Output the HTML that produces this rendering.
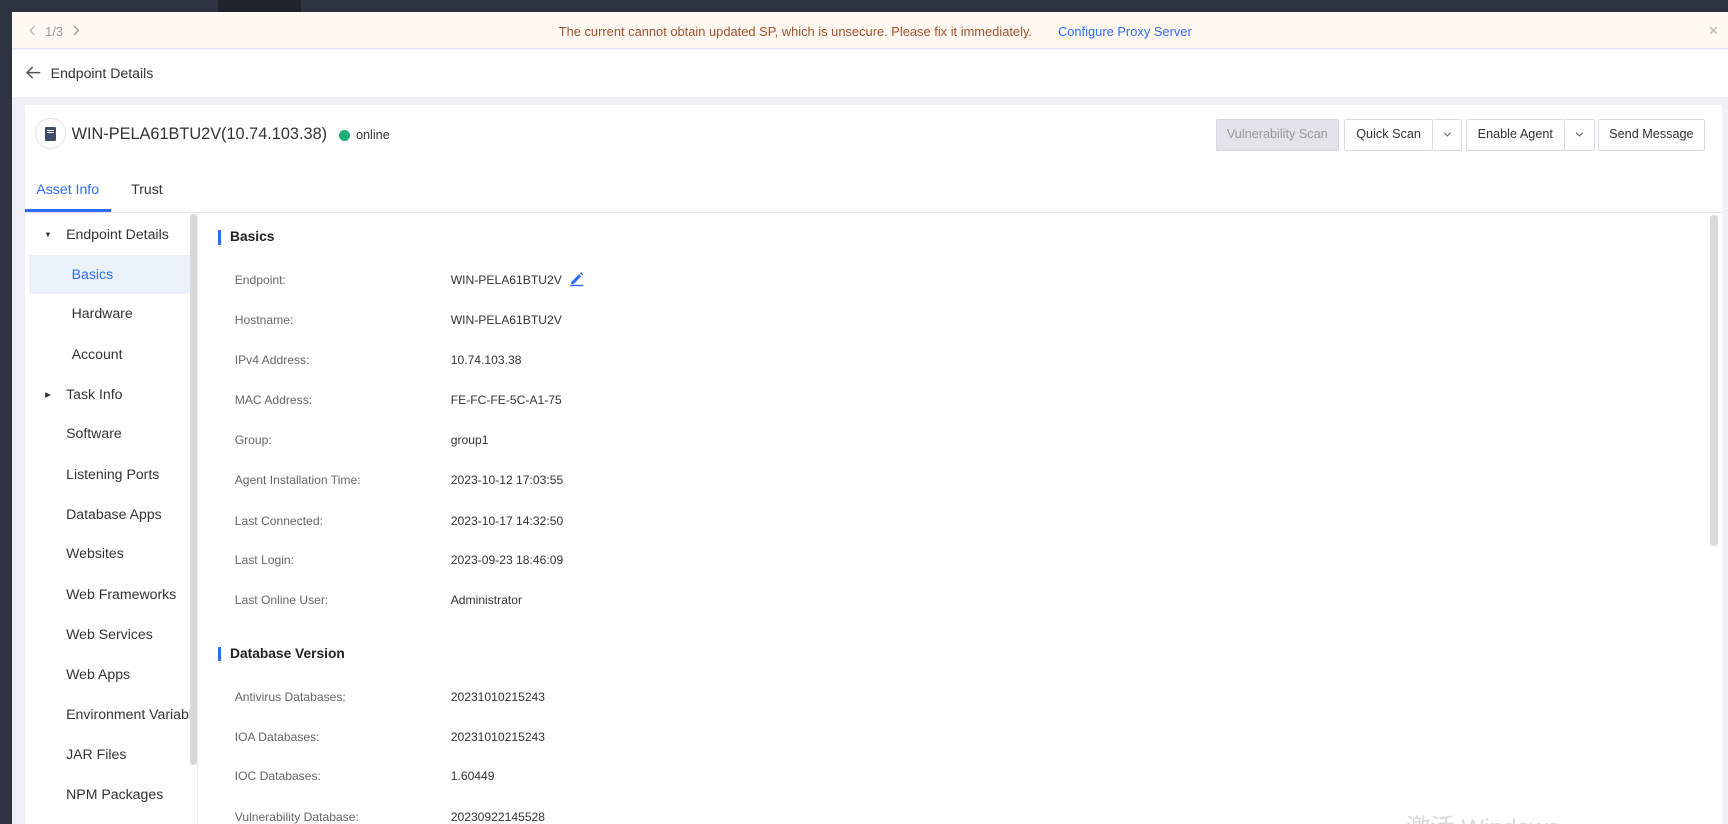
<!DOCTYPE html>
<html><head><meta charset="utf-8"><style>
html,body{margin:0;padding:0;overflow:hidden}
body{width:1568px;height:748px;zoom:1.10204;background:#2e3440;font-family:"Liberation Sans",Arial,sans-serif;position:relative;color:#333}
.abs{position:absolute}
.topdark{left:0;top:0;width:1568px;height:11px;background:#2e3440}
.topdark .b{position:absolute;left:198px;top:0;width:75px;height:11px;background:#1f232b}
.leftdark{left:0;top:0;width:11px;height:748px;background:#2e3440}
.main{left:11px;top:11px;width:1557px;height:737px;background:#edf0f7}
.banner{left:11px;top:11px;width:1557px;height:33px;background:#fff9f2;border-bottom:1px solid #e3e6ee;font-size:11.7px}
.hdr{left:11px;top:45px;width:1557px;height:43px;background:#fff}
.card{left:23px;top:95px;width:1540px;height:653px;background:#fff}
.btn{position:absolute;top:108px;height:29px;border:1px solid #d9dce3;border-radius:2px;background:#fff;font-size:11.5px;color:#333;line-height:27px;text-align:center;box-sizing:border-box}
.side div{position:absolute;left:0;width:146px;height:36px;line-height:36px;font-size:12.8px;color:#333}
.row{position:absolute;font-size:11px}
.row .l{position:absolute;left:213px;color:#666;white-space:nowrap}
.row .v{position:absolute;left:409px;color:#333;white-space:nowrap}
.sec{position:absolute;left:198px;font-size:12.5px;font-weight:bold;color:#222;border-left:3px solid #2f6bff;padding-left:8px;height:13px;line-height:13px}
</style></head><body>
<div class="abs topdark"><div class="b"></div></div>
<div class="abs leftdark"></div>
<div class="abs main"></div>
<div class="abs banner">
 <svg class="abs" style="left:15px;top:12px" width="6" height="10" viewBox="0 0 6 10"><path d="M5 1L1 5l4 4" fill="none" stroke="#bbb" stroke-width="1.2"/></svg>
 <span class="abs" style="left:30px;top:11px;color:#999">1/3</span>
 <svg class="abs" style="left:55px;top:12px" width="6" height="10" viewBox="0 0 6 10"><path d="M1 1l4 4-4 4" fill="none" stroke="#999" stroke-width="1.2"/></svg>
 <span class="abs" style="left:496px;top:11px;color:#a0522d">The current cannot obtain updated SP, which is unsecure. Please fix it immediately.</span>
 <span class="abs" style="left:949px;top:11px;color:#2f6bff">Configure Proxy Server</span>
 <svg class="abs" style="left:1540px;top:13px" width="8" height="8" viewBox="0 0 8 8"><path d="M1 1l6 6M7 1L1 7" stroke="#bbb" stroke-width="1.3"/></svg>
</div>
<div class="abs hdr">
 <svg class="abs" style="left:13px;top:15px" width="14" height="12" viewBox="0 0 14 12"><path d="M13 6H2M6 1L1 6l5 5" fill="none" stroke="#555" stroke-width="1.4"/></svg>
 <span class="abs" style="left:35px;top:14px;font-size:12.8px;color:#333">Endpoint Details</span>
</div>
<div class="abs card"></div>
<div class="abs" style="left:32px;top:107px;width:28px;height:28px;border:1.5px solid #e0e3ea;border-radius:50%;box-sizing:border-box;background:#fff"></div>
<div class="abs" style="left:41px;top:115px;width:10px;height:13px;background:#3d4d6a;border-radius:1px"></div>
<div class="abs" style="left:43px;top:118px;width:6px;height:1px;background:#fff"></div>
<div class="abs" style="left:43px;top:120px;width:6px;height:1px;background:#fff"></div>
<span class="abs" style="left:65px;top:113px;font-size:14.8px;color:#333">WIN-PELA61BTU2V(10.74.103.38)</span>
<div class="abs" style="left:308px;top:118px;width:10px;height:10px;border-radius:50%;background:#1fae78"></div>
<span class="abs" style="left:323px;top:116px;font-size:11.5px;color:#333">online</span>
<div class="btn" style="left:1103px;width:112px;background:#e1e4ea;color:#999;border-color:#d4d7de">Vulnerability Scan</div>
<div class="btn" style="left:1220px;width:80px">Quick Scan</div>
<div class="btn" style="left:1299px;width:28px"><svg width="8" height="6" viewBox="0 0 8 6"><path d="M1 1.5l3 3 3-3" fill="none" stroke="#666" stroke-width="1"/></svg></div>
<div class="btn" style="left:1330px;width:90px">Enable Agent</div>
<div class="btn" style="left:1419px;width:28px"><svg width="8" height="6" viewBox="0 0 8 6"><path d="M1 1.5l3 3 3-3" fill="none" stroke="#666" stroke-width="1"/></svg></div>
<div class="btn" style="left:1450px;width:97px">Send Message</div>
<span class="abs" style="left:33px;top:164px;font-size:12.8px;color:#2f6bff">Asset Info</span>
<span class="abs" style="left:119px;top:164px;font-size:12.8px;color:#333">Trust</span>
<div class="abs" style="left:23px;top:192px;width:1540px;height:1px;background:#e3e6ee"></div>
<div class="abs" style="left:23px;top:190px;width:78px;height:2px;background:#2f6bff"></div>
<div class="abs side" style="left:26px;top:195px;width:146px;height:553px">
 <div style="top:0"><span style="font-size:7px;position:absolute;left:14px">&#9660;</span><span style="position:absolute;left:34px">Endpoint Details</span></div>
 <div style="top:36px;background:#ebf1fb;color:#2f6bff;padding-left:39px;box-sizing:border-box">Basics</div>
 <div style="top:72px;padding-left:39px;box-sizing:border-box">Hardware</div>
 <div style="top:109px;padding-left:39px;box-sizing:border-box">Account</div>
 <div style="top:145px"><span style="font-size:7px;position:absolute;left:15px">&#9654;</span><span style="position:absolute;left:34px">Task Info</span></div>
 <div style="top:181px;padding-left:34px;box-sizing:border-box">Software</div>
 <div style="top:218px;padding-left:34px;box-sizing:border-box">Listening Ports</div>
 <div style="top:254px;padding-left:34px;box-sizing:border-box">Database Apps</div>
 <div style="top:290px;padding-left:34px;box-sizing:border-box">Websites</div>
 <div style="top:327px;padding-left:34px;box-sizing:border-box">Web Frameworks</div>
 <div style="top:363px;padding-left:34px;box-sizing:border-box">Web Services</div>
 <div style="top:399px;padding-left:34px;box-sizing:border-box">Web Apps</div>
 <div style="top:436px;padding-left:34px;box-sizing:border-box;white-space:nowrap;overflow:hidden">Environment Variables</div>
 <div style="top:472px;padding-left:34px;box-sizing:border-box">JAR Files</div>
 <div style="top:508px;padding-left:34px;box-sizing:border-box">NPM Packages</div>
</div>
<div class="abs" style="left:172px;top:194px;width:7px;height:500px;background:#d9d9d9;border-radius:3px"></div>
<div class="abs" style="left:179px;top:193px;width:1px;height:555px;background:#eceef2"></div>
<div class="abs" style="left:1552px;top:195px;width:7px;height:300px;background:#d9d9d9;border-radius:3px"></div>
<div class="sec" style="top:209px">Basics</div>
<div class="row" style="top:248px"><span class="l">Endpoint:</span><span class="v">WIN-PELA61BTU2V</span>
 <svg class="abs" style="left:516px;top:-2px" width="14" height="14" viewBox="0 0 14 14"><path d="M2 10l7-7 2 2-7 7H2z M10 2l1-1 2 2-1 1z" fill="#2f6bff"/><rect x="1" y="12.5" width="12" height="1.3" fill="#2f6bff"/></svg></div>
<div class="row" style="top:284px"><span class="l">Hostname:</span><span class="v">WIN-PELA61BTU2V</span></div>
<div class="row" style="top:320px"><span class="l">IPv4 Address:</span><span class="v">10.74.103.38</span></div>
<div class="row" style="top:357px"><span class="l">MAC Address:</span><span class="v">FE-FC-FE-5C-A1-75</span></div>
<div class="row" style="top:393px"><span class="l">Group:</span><span class="v">group1</span></div>
<div class="row" style="top:429px"><span class="l">Agent Installation Time:</span><span class="v">2023-10-12 17:03:55</span></div>
<div class="row" style="top:466px"><span class="l">Last Connected:</span><span class="v">2023-10-17 14:32:50</span></div>
<div class="row" style="top:502px"><span class="l">Last Login:</span><span class="v">2023-09-23 18:46:09</span></div>
<div class="row" style="top:538px"><span class="l">Last Online User:</span><span class="v">Administrator</span></div>
<div class="sec" style="top:587px">Database Version</div>
<div class="row" style="top:626px"><span class="l">Antivirus Databases:</span><span class="v">20231010215243</span></div>
<div class="row" style="top:662px"><span class="l">IOA Databases:</span><span class="v">20231010215243</span></div>
<div class="row" style="top:698px"><span class="l">IOC Databases:</span><span class="v">1.60449</span></div>
<div class="row" style="top:735px"><span class="l">Vulnerability Database:</span><span class="v">20230922145528</span></div>
<span class="abs" style="left:1276px;top:733px;font-size:22px;color:#d8d8d8;font-family:'Liberation Sans','Noto Sans CJK SC',sans-serif">激活 Windows</span>
</body></html>
